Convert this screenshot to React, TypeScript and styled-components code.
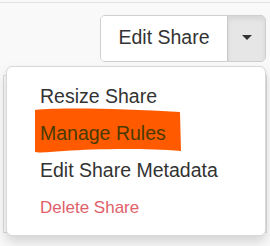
import React from "react";
import styled, { createGlobalStyle } from "styled-components";

const GlobalStyle = createGlobalStyle`
    html, body {
        margin: 0;
        padding: 0;
        background: #f9f9f9;
        font-family: "Liberation Sans", Arial, sans-serif;
    }
`;

const Page = styled.div`
    position: relative;
    width: 270px;
    height: 246px;
    padding-top: 2px;
    box-sizing: border-box;
    overflow: hidden;
`;

const Frame = styled.div`
    border-top: 1px solid #e2e2e2;
    height: 100%;
`;

const Toolbar = styled.div`
    display: flex;
    justify-content: flex-end;
    padding: 12px 4px 0 0;
`;

const SplitButton = styled.div`
    display: flex;
    height: 47px;
    border: 1px solid #cfcfcf;
    border-radius: 5px;
    overflow: hidden;
    box-sizing: border-box;
`;

const MainButton = styled.button`
    width: 126px;
    border: 0;
    background: #fff;
    color: #333;
    font-family: "Liberation Sans", Arial, sans-serif;
    font-size: 19.5px;
    padding: 0 0 2px;
    cursor: pointer;
`;

const CaretButton = styled.button`
    width: 38px;
    border: 0;
    border-left: 1px solid #c8c8c8;
    background: #e6e6e6;
    box-shadow: inset 0 3px 5px rgba(0, 0, 0, 0.08);
    display: flex;
    align-items: center;
    justify-content: center;
    padding: 0 0 2px;
`;

const Caret = styled.span`
    width: 0;
    height: 0;
    border-top: 5px solid #333;
    border-left: 5px solid transparent;
    border-right: 5px solid transparent;
`;

const Table = styled.div`
    margin: 13px 3px 0;
    height: 156px;
    border: 1px solid #dcdcdc;
    background: #fafafa;
`;

const Menu = styled.ul`
    position: absolute;
    top: 66px;
    left: 6px;
    width: 260px;
    height: 170px;
    margin: 0;
    padding: 11px 0 0;
    list-style: none;
    box-sizing: border-box;
    background: #fff;
    border: 1px solid #d8d8d8;
    border-radius: 6px;
    box-shadow: 0 6px 12px rgba(0, 0, 0, 0.15);
`;

const Item = styled.li<{ $danger?: boolean }>`
    position: relative;
    height: 37px;
    display: flex;
    align-items: center;
    padding-left: 33px;
    isolation: isolate;
    font-size: ${({ $danger }) => ($danger ? "17px" : "19.5px")};
    color: ${({ $danger }) => ($danger ? "#e0606a" : "#333")};
`;

const Label = styled.span<{ $marked?: boolean }>`
    position: relative;
    color: ${({ $marked }) => ($marked ? "#4a3a00" : "inherit")};
`;

const Marker = styled.svg`
    position: absolute;
    left: -6px;
    top: -15px;
    width: 148px;
    height: 46px;
    z-index: -1;
`;

const Highlight: React.FC = () => (
    <Marker viewBox="0 0 148 46">
        <path
            d="M1 3 C30 0 90 2 146 5 L147 44 C110 41 60 42 30 44 C15 45 5 46 1 45 Z"
            fill="#ff5a00"
        />
    </Marker>
);

const App: React.FC = () => {
    return (
        <>
            <GlobalStyle />
            <Page>
                <Frame>
                    <Toolbar>
                        <SplitButton>
                            <MainButton>Edit Share</MainButton>
                            <CaretButton>
                                <Caret />
                            </CaretButton>
                        </SplitButton>
                    </Toolbar>
                    <Table />
                </Frame>
                <Menu>
                    <Item>Resize Share</Item>
                    <Item>
                        <Label $marked>
                            <Highlight />
                            Manage Rules
                        </Label>
                    </Item>
                    <Item>Edit Share Metadata</Item>
                    <Item $danger>Delete Share</Item>
                </Menu>
            </Page>
        </>
    );
};

export default App;
